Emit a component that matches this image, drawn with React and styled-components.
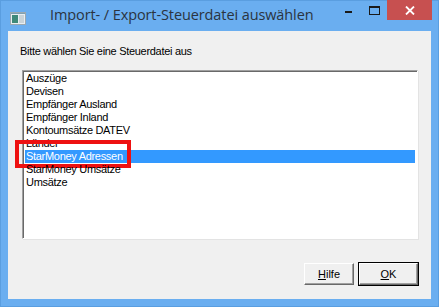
import styled, { createGlobalStyle } from 'styled-components'

const GlobalStyle = createGlobalStyle`
  html, body {
    margin: 0;
    padding: 0;
    background: #6aaef0;
  }
`

const items = [
  'Auszüge',
  'Devisen',
  'Empfänger Ausland',
  'Empfänger Inland',
  'Kontoumsätze DATEV',
  'Länder',
  'StarMoney Adressen',
  'StarMoney Umsätze',
  'Umsätze',
]

export default function App() {
  const selected = 6
  return (
    <>
      <GlobalStyle />
      <Window>
        <TitleBar>
          <AppIcon>
            <svg width="16" height="13" viewBox="0 0 16 13">
              <rect x="0.5" y="0.5" width="15" height="12" fill="#e8eef2" stroke="#9aa8b0" />
              <rect x="2" y="3" width="6" height="8" fill="#3f8a7a" />
              <rect x="9" y="3" width="5" height="8" fill="#c9d3d8" />
              <rect x="1" y="1" width="14" height="1" fill="#7fa0b0" />
            </svg>
          </AppIcon>
          <Title>Import- / Export-Steuerdatei auswählen</Title>
          <Caption>
            <CapButton>
              <svg width="9" height="9" viewBox="0 0 9 9"><rect x="1" y="5" width="7" height="2" fill="#1a1a1a" /></svg>
            </CapButton>
            <CapButton>
              <svg width="11" height="9" viewBox="0 0 11 9"><rect x="0.5" y="0.5" width="10" height="8" fill="none" stroke="#1a1a1a" /><rect x="0" y="0" width="11" height="2" fill="#1a1a1a" /></svg>
            </CapButton>
            <CloseButton>
              <svg width="10" height="9" viewBox="0 0 10 9">
                <path d="M1 0.5 L9 8.5 M9 0.5 L1 8.5" stroke="#fff" strokeWidth="1.8" />
              </svg>
            </CloseButton>
          </Caption>
        </TitleBar>
        <Client>
          <Prompt>Bitte wählen Sie eine Steuerdatei aus</Prompt>
          <ListBox>
            {items.map((item, i) => (
              <ListItem key={item} selected={i === selected}>
                {item}
                {i === selected && <Marker />}
              </ListItem>
            ))}
          </ListBox>
          <ButtonRow>
            <DlgButton width={50}><u>H</u>ilfe</DlgButton>
            <DlgButton width={59} isDefault><u>O</u>K</DlgButton>
          </ButtonRow>
        </Client>
      </Window>
    </>
  )
}

const Window = styled.div`
  width: 439px;
  height: 307px;
  box-sizing: border-box;
  background: #6aaef0;
  border: 1px solid #5a9ee0;
  display: flex;
  flex-direction: column;
`

const TitleBar = styled.div`
  height: 30px;
  display: flex;
  align-items: flex-start;
  font-family: "Open Sans", "Noto Sans", sans-serif;
`

const AppIcon = styled.div`
  margin: 7px 0 0 9px;
  height: 13px;
`

const Title = styled.div`
  margin: 4px 0 0 24px;
  font-size: 14.5px;
  color: #2b3440;
  flex: 1;
  letter-spacing: -0.1px;
`

const Caption = styled.div`
  display: flex;
  align-items: flex-start;
  margin-top: -1px;
  margin-right: 6px;
`

const CapButton = styled.div`
  width: 26px;
  height: 20px;
  display: flex;
  align-items: center;
  justify-content: center;
`

const CloseButton = styled.div`
  width: 45px;
  height: 20px;
  background: #c75050;
  display: flex;
  align-items: center;
  justify-content: center;
`

const Client = styled.div`
  flex: 1;
  margin: 0 7px 7px 7px;
  background: #f0f0f0;
  display: flex;
  flex-direction: column;
  padding: 0 13px 14px 14px;
  font-family: "Liberation Sans", Arial, sans-serif;
  font-size: 11px;
  letter-spacing: -0.3px;
  color: #000;
`

const Prompt = styled.div`
  margin: 14px 0 0 -2px;
  line-height: 13px;
`

const ListBox = styled.div`
  margin-top: 12px;
  height: 169px;
  box-sizing: border-box;
  background: #fff;
  border-top: 1px solid #a0a0a0;
  border-left: 1px solid #a0a0a0;
  border-right: 1px solid #fff;
  border-bottom: 1px solid #fff;
  box-shadow: inset 1px 1px 0 #696969, 1px 1px 0 #e3e3e3;
  padding: 1px 2px;
`

const ListItem = styled.div`
  position: relative;
  height: 13px;
  line-height: 13px;
  padding-left: 1px;
  white-space: nowrap;
  background: ${p => (p.selected ? '#3399ff' : 'transparent')};
  color: ${p => (p.selected ? '#fff' : '#000')};
`

const Marker = styled.span`
  position: absolute;
  left: -10px;
  top: -10px;
  width: 108px;
  height: 20px;
  border: 4px solid #ee1111;
`

const ButtonRow = styled.div`
  margin-top: auto;
  display: flex;
  justify-content: flex-end;
  gap: 5px;
`

const DlgButton = styled.button`
  width: ${p => p.width}px;
  height: 22px;
  padding: 0;
  font-family: "Liberation Sans", Arial, sans-serif;
  font-size: 11px;
  color: #000;
  background: #f0f0f0;
  border-top: 1px solid #fff;
  border-left: 1px solid #fff;
  border-right: 1px solid #696969;
  border-bottom: 1px solid #696969;
  box-shadow: inset -1px -1px 0 #a0a0a0${p => (p.isDefault ? ', 0 0 0 1px #000' : '')};
  ${p => p.isDefault && 'outline: none;'}
`
